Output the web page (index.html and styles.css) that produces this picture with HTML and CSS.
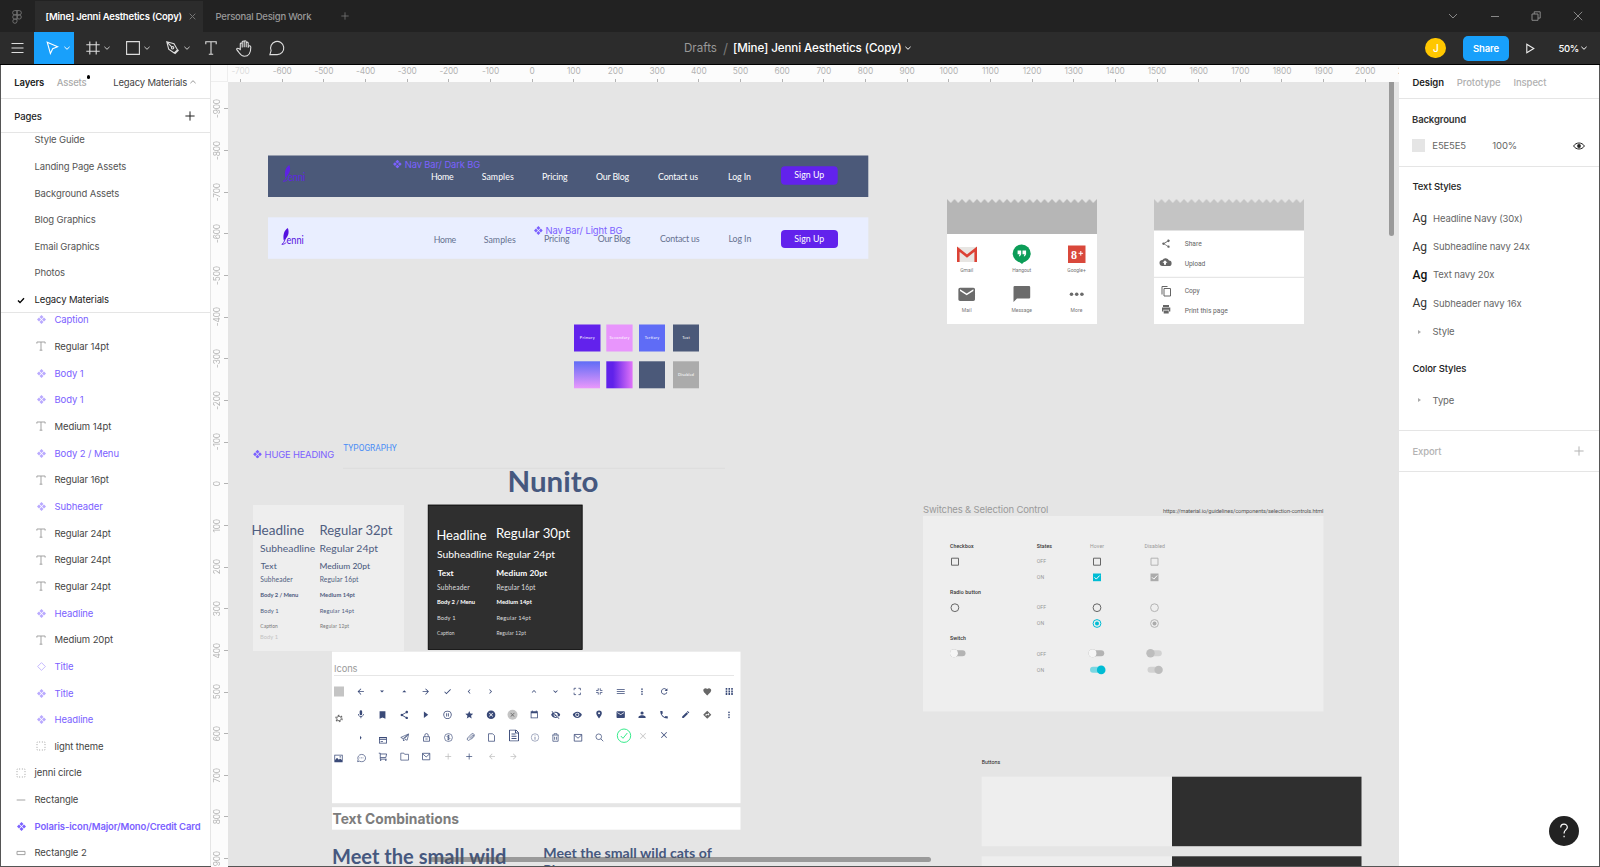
FILE: index.html
```html
<!DOCTYPE html>
<html lang="en">
<head>
<meta charset="utf-8">
<title>[Mine] Jenni Aesthetics (Copy)</title>
<link rel="stylesheet" href="styles.css">
</head>
<body>
<svg class="defs" width="0" height="0">
  <defs>
    <symbol id="component" viewBox="0 0 10 10"><path d="M5 0l2.200 2.200L5 4.400 2.800 2.200zM5 5.600l2.200 2.200L5 10 2.800 7.800zM2.200 2.800L4.400 5 2.200 7.200 0 5zM7.800 2.800L10 5 7.800 7.200 5.600 5z" fill="currentColor"/></symbol>
    <symbol id="diamond" viewBox="0 0 10 10"><path d="M5 .7L9.3 5 5 9.3.7 5z" fill="none" stroke="currentColor" stroke-width=".9"/></symbol>
    <symbol id="text" viewBox="0 0 10 10"><path d="M.9 2.6V1h8.2v1.6M5 1v8.2M3.6 9.2h2.8" fill="none" stroke="currentColor" stroke-width=".9"/></symbol>
    <symbol id="group" viewBox="0 0 10 10"><path d="M1 1h8v8H1z" fill="none" stroke="currentColor" stroke-width="1" stroke-dasharray=".9 1.767" stroke-dashoffset=".45"/></symbol>
    <symbol id="line" viewBox="0 0 10 10"><path d="M.7 5h8.6" stroke="currentColor" stroke-width=".9"/></symbol>
    <symbol id="rect" viewBox="0 0 10 10"><path d="M1 3.4h8v3.2H1z" fill="none" stroke="currentColor" stroke-width=".9"/></symbol>
    <symbol id="chev" viewBox="0 0 8 8"><path d="M1.400 2.800L4 5.300l2.600-2.500" fill="none" stroke="currentColor" stroke-width="1"/></symbol>
    <symbol id="plus" viewBox="0 0 10 10"><path d="M5 .4v9.2M.4 5h9.200" fill="none" stroke="currentColor" stroke-width="1"/></symbol>
    <symbol id="back" viewBox="0 0 24 24"><path d="M20 11H7.800l5.600-5.600L12 4l-8 8 8 8 1.400-1.400L7.800 13H20z"/></symbol>
    <symbol id="forward" viewBox="0 0 24 24"><path d="M12 4l-1.400 1.400 5.600 5.600H4v2h12.200l-5.600 5.600L12 20l8-8z"/></symbol>
    <symbol id="check" viewBox="0 0 24 24"><path d="M9 16.200L4.800 12l-1.400 1.400L9 19 21 7l-1.400-1.400z"/></symbol>
    <symbol id="left" viewBox="0 0 24 24"><path d="M15.400 7.400L14 6l-6 6 6 6 1.400-1.400-4.600-4.600z"/></symbol>
    <symbol id="right" viewBox="0 0 24 24"><path d="M10 6L8.600 7.400l4.600 4.600-4.600 4.600L10 18l6-6z"/></symbol>
    <symbol id="up" viewBox="0 0 24 24"><path d="M12 8l-6 6 1.400 1.400 4.600-4.600 4.600 4.600L18 14z"/></symbol>
    <symbol id="down" viewBox="0 0 24 24"><path d="M16.600 8.600L12 13.200 7.400 8.600 6 10l6 6 6-6z"/></symbol>
    <symbol id="full" viewBox="0 0 24 24"><path d="M4 9V4h5M15 4h5v5M20 15v5h-5M9 20H4v-5" fill="none" stroke="currentColor" stroke-width="2"/></symbol>
    <symbol id="unfull" viewBox="0 0 24 24"><path d="M9.500 4v5.500H4M14.500 4v5.500H20M20 14.500h-5.500V20M4 14.500h5.500V20" fill="none" stroke="currentColor" stroke-width="2"/></symbol>
    <symbol id="menu" viewBox="0 0 24 24"><path d="M2 18h20v-2H2zM2 13h20v-2H2zM2 6v2h20V6z"/></symbol>
    <symbol id="dots" viewBox="0 0 24 24"><path d="M12 8a2 2 0 100-4 2 2 0 000 4zm0 2a2 2 0 100 4 2 2 0 000-4zm0 6a2 2 0 100 4 2 2 0 000-4z"/></symbol>
    <symbol id="refresh" viewBox="0 0 24 24"><path d="M17.600 6.400A8 8 0 1019.700 14h-2.100A6 6 0 1112 6c1.700 0 3.100.7 4.200 1.800L13 11h7V4z"/></symbol>
    <symbol id="heart" viewBox="0 0 24 24"><path d="M12 21.300l-1.500-1.300C5.400 15.400 2 12.300 2 8.500 2 5.400 4.400 3 7.500 3c1.700 0 3.400.8 4.500 2.100C13.100 3.800 14.800 3 16.500 3 19.600 3 22 5.400 22 8.500c0 3.800-3.400 6.900-8.600 11.500z"/></symbol>
    <symbol id="grid" viewBox="0 0 24 24"><path d="M3 8h4V3H3zm7 13h4v-5h-4zm-7 0h4v-5H3zm0-6.500h4v-5H3zm7 0h4v-5h-4zM17 3v5h4V3zm-7 5h4V3h-4zm7 6.500h4v-5h-4zm0 6.500h4v-5h-4z"/></symbol>
    <symbol id="mic" viewBox="0 0 24 24"><path d="M12 14a3 3 0 003-3V5a3 3 0 10-6 0v6a3 3 0 003 3zm5.300-3a5.300 5.300 0 01-10.600 0H5c0 3.400 2.700 6.200 6 6.700V21h2v-3.300c3.300-.5 6-3.300 6-6.700z"/></symbol>
    <symbol id="bookmark" viewBox="0 0 24 24"><path d="M5 3v18l7-3 7 3V3z"/></symbol>
    <symbol id="share" viewBox="0 0 24 24"><path d="M18 16.100c-.8 0-1.400.3-2 .8L8.900 12.700a3.300 3.300 0 000-1.400L16 7.200A3 3 0 1015 5c0 .2 0 .5.100.7L8 9.800A3 3 0 108 14.200l7.100 4.200-.1.600a2.900 2.900 0 103-2.900z"/></symbol>
    <symbol id="play" viewBox="0 0 24 24"><path d="M8 4v16l11-8z"/></symbol>
    <symbol id="pause" viewBox="0 0 24 24"><path d="M9 16h2V8H9zm3-14a10 10 0 100 20 10 10 0 000-20zm0 18a8 8 0 110-16 8 8 0 010 16zm1-4h2V8h-2z"/></symbol>
    <symbol id="star" viewBox="0 0 24 24"><path d="M12 17.300l6.200 3.700-1.700-7L22 9.200l-7.200-.6L12 2 9.200 8.600 2 9.200 7.500 14l-1.700 7z"/></symbol>
    <symbol id="cancel" viewBox="0 0 24 24"><path d="M12 1a11 11 0 100 22 11 11 0 000-22zm5 14.600L15.600 17 12 13.400 8.400 17 7 15.600l3.600-3.600L7 8.400 8.400 7l3.600 3.600L15.600 7 17 8.400 13.400 12z"/></symbol>
    <symbol id="close" viewBox="0 0 24 24"><path d="M20 5.400L18.600 4 12 10.600 5.400 4 4 5.400l6.600 6.600L4 18.600 5.400 20l6.600-6.600 6.600 6.600 1.400-1.400-6.600-6.600z"/></symbol>
    <symbol id="cal" viewBox="0 0 24 24"><path d="M20 3h-2V1h-2v2H8V1H6v2H3v18h18V3zm-1 16H5V8h14z"/></symbol>
    <symbol id="eye" viewBox="0 0 24 24"><path d="M12 4.500C7 4.500 2.700 7.600 1 12a11.800 11.800 0 0022 0c-1.700-4.400-6-7.500-11-7.500zM12 17a5 5 0 110-10 5 5 0 010 10zm0-8a3 3 0 100 6 3 3 0 000-6z"/></symbol>
    <symbol id="eyeoff" viewBox="0 0 24 24"><path d="M12 7a5 5 0 014.600 6.800l3 3A11.800 11.800 0 0023 12C21.300 7.600 17 4.500 12 4.500c-1.400 0-2.700.3-4 .7l2.200 2.200c.5-.3 1.100-.4 1.800-.4zM2 4.300l2.700 2.700A11.800 11.800 0 001 12a11.800 11.800 0 0015.400 6.700l3.300 3.300 1.300-1.300L3.300 3zM7.500 9.800l1.600 1.500a3 3 0 003.600 3.600l1.500 1.600A5 5 0 017.500 9.800z"/></symbol>
    <symbol id="pin" viewBox="0 0 24 24"><path d="M12 2a7 7 0 00-7 7c0 5.200 7 13 7 13s7-7.800 7-13a7 7 0 00-7-7zm0 9.500a2.500 2.500 0 110-5 2.500 2.500 0 010 5z"/></symbol>
    <symbol id="mail" viewBox="0 0 24 24"><path d="M20 4H4a2 2 0 00-2 2v12c0 1.100.9 2 2 2h16a2 2 0 002-2V6a2 2 0 00-2-2zm0 4l-8 5-8-5V6l8 5 8-5z"/></symbol>
    <symbol id="mailo" viewBox="0 0 24 24"><path d="M3 4h18v16H3zM3 5l9 8 9-8" fill="none" stroke="currentColor" stroke-width="1.900"/></symbol>
    <symbol id="person" viewBox="0 0 24 24"><path d="M12 12a4 4 0 100-8 4 4 0 000 8zm0 2c-2.700 0-9 1.300-9 4v3h18v-3c0-2.700-6.300-4-9-4z"/></symbol>
    <symbol id="phone" viewBox="0 0 24 24"><path d="M6.600 10.800a15.100 15.100 0 006.600 6.600l2.200-2.200c.3-.3.700-.4 1-.2 1.100.4 2.300.6 3.600.6.600 0 1 .4 1 1V20c0 .6-.4 1-1 1A17 17 0 013 4c0-.6.500-1 1-1h3.500c.6 0 1 .4 1 1 0 1.300.2 2.500.6 3.600.1.300 0 .7-.3 1z"/></symbol>
    <symbol id="pencil" viewBox="0 0 24 24"><path d="M3 17.200V21h3.800L17.800 9.900l-3.700-3.700zM21 7l-4-4-2 2 4 4z"/></symbol>
    <symbol id="directions" viewBox="0 0 24 24"><path d="M21.700 11.300l-9-9a1 1 0 00-1.400 0l-9 9a1 1 0 000 1.400l9 9c.4.400 1 .4 1.400 0l9-9a1 1 0 000-1.400zM14 14.500V12h-4v3H8v-4c0-.6.400-1 1-1h5V7.500l3.500 3.500z"/></symbol>
    <symbol id="gear" viewBox="0 0 24 24"><circle cx="12" cy="12" r="6" fill="none" stroke="currentColor" stroke-width="2.400"/><circle cx="12" cy="12" r="8.500" fill="none" stroke="currentColor" stroke-width="3" stroke-dasharray="4.450 4.450"/></symbol>
    <symbol id="card" viewBox="0 0 24 24"><path d="M2 4h20v16H2zm2 7v7h16v-7zM4 6v2h16V6zM6 14h6v1.800H6z" fill-rule="evenodd"/></symbol>
    <symbol id="plane" viewBox="0 0 24 24"><path d="M22 3L2 12l6 3 1 6 4-4 5 2zM8 15L20 5l-9 11" fill="none" stroke="currentColor" stroke-width="1.800"/></symbol>
    <symbol id="lock" viewBox="0 0 24 24"><path d="M4 10h16v12H4zM7.500 10V6a4.500 4.500 0 019 0v4M9 16h6" fill="none" stroke="currentColor" stroke-width="2"/></symbol>
    <symbol id="dollar" viewBox="0 0 24 24"><circle cx="12" cy="12" r="10" fill="none" stroke="currentColor" stroke-width="1.600"/><path d="M15.500 8.500c-1-1.500-7-1.800-7 1 0 3 7 1.800 7 4.800 0 2.800-6 2.600-7.200.7M12 5v14" fill="none" stroke="currentColor" stroke-width="1.800"/></symbol>
    <symbol id="clip" viewBox="0 0 24 24"><path d="M8 15l8-8c2-2 4 0 2.500 2L9 19c-3 3-8-1-5-5L13.500 4c3.500-4 10 1 6.500 6l-7 7.500" fill="none" stroke="currentColor" stroke-width="1.700"/></symbol>
    <symbol id="file" viewBox="0 0 24 24"><path d="M4 2h11l5 5v15H4z" fill="none" stroke="currentColor" stroke-width="2"/></symbol>
    <symbol id="doc" viewBox="0 0 24 24"><path d="M3 1h13l5 5v17H3zM7 9h8M7 13.500h10M7 18h10M15 1v6h6" fill="none" stroke="currentColor" stroke-width="1.900"/></symbol>
    <symbol id="info" viewBox="0 0 24 24"><circle cx="12" cy="12" r="10" fill="none" stroke="currentColor" stroke-width="1.500"/><path d="M11 6.500h2v2.300h-2zM11 10.500h2V18h-2z"/></symbol>
    <symbol id="trash" viewBox="0 0 24 24"><path d="M3 5.500h18M8 5V2h8v3M5 6v16h14V6M9.500 10v8M14.500 10v8" fill="none" stroke="currentColor" stroke-width="1.900"/></symbol>
    <symbol id="search" viewBox="0 0 24 24"><circle cx="10" cy="10" r="7.500" fill="none" stroke="currentColor" stroke-width="1.900"/><path d="M15.500 15.500L22 22" stroke="currentColor" stroke-width="2"/></symbol>
    <symbol id="image" viewBox="0 0 24 24"><path d="M1 2h22v20H1zm2 2v12l5-6 5 5 3-3 5 4V4zm12 2h3v3h-3z" fill-rule="evenodd"/></symbol>
    <symbol id="chat" viewBox="0 0 24 24"><path d="M2 22l1.500-5.500A10 9.500 0 117 20.500zM7 12h2M11 12h2M15 12h2" fill="none" stroke="currentColor" stroke-width="1.800"/></symbol>
    <symbol id="cart" viewBox="0 0 24 24"><path d="M1 3h4v15h16M5 5h16l-2 9H5" fill="none" stroke="currentColor" stroke-width="2"/><circle cx="6" cy="20.500" r="2"/><circle cx="19" cy="20.500" r="2"/></symbol>
    <symbol id="folder" viewBox="0 0 24 24"><path d="M2 3h8l2 3h10v15H2z" fill="none" stroke="currentColor" stroke-width="1.800"/></symbol>
    <symbol id="add" viewBox="0 0 24 24"><path d="M12 4v16M4 12h16" fill="none" stroke="currentColor" stroke-width="1.900"/></symbol>
    <linearGradient id="g1" x1="0" y1="0" x2="0" y2="1"><stop offset="0" stop-color="#5f6cf6"/><stop offset="1" stop-color="#ea98fb"/></linearGradient>
    <linearGradient id="g2" x1="0" y1="0" x2="1" y2="0"><stop offset=".25" stop-color="#6022ea"/><stop offset="1" stop-color="#e173f8"/></linearGradient>
    <pattern id="teeth" width="7.500" height="5" patternUnits="userSpaceOnUse" x="0" y="0"><path d="M0 0l3.750 4L7.500 0z" fill="#e5e5e5"/></pattern>
    <g id="logo"><path d="M6.300 0C2.500 2.300 1.300 7 2.200 12.300 6.600 9.500 8.200 4.500 6.300 0z" fill="currentColor"/><path d="M5.200 4C4.500 9 3 15 .3 16.300c1.600.2 3.600-.8 4.500-2" fill="none" stroke="currentColor" stroke-width=".9"/><text class="logo-text" x="5" y="15.800" textLength="17.300" lengthAdjust="spacingAndGlyphs">enni</text></g>
  </defs>
</svg>

<div class="app">
  <header class="tabs">
    <svg class="figma" viewBox="0 0 10 14" width="10" height="14"><path d="M5 .6H2.800a2.100 2.100 0 000 4.300H5zM5 .6h2.200a2.100 2.100 0 010 4.300H5zM5 4.900H2.800a2.100 2.100 0 000 4.200H5zM5 9.100H2.800A2.100 2.100 0 105 11.300z" /><circle cx="7.200" cy="7" r="2.100"/></svg>
    <div class="tab active"><span>[Mine] Jenni Aesthetics (Copy)</span><svg width="7" height="7" viewBox="0 0 7 7"><path d="M.7.7l5.600 5.600M6.300.7L.7 6.300"/></svg></div>
    <div class="tab second"><span>Personal Design Work</span></div>
    <svg class="newtab" width="8" height="8"><use href="#plus"/></svg>
    <div class="window">
      <svg viewBox="0 0 10 10"><path d="M1 3l4 4 4-4"/></svg>
      <svg viewBox="0 0 10 10"><path d="M1 5.500h8"/></svg>
      <svg viewBox="0 0 10 10"><path d="M1 3h6v6.300H1zM3.200 3V.8h6v6.300H7"/></svg>
      <svg viewBox="0 0 10 10"><path d="M.8.800l8.400 8.400M9.200.800L.8 9.200"/></svg>
    </div>
  </header>

  <div class="toolbar">
    <div class="tools">
      <div class="tool menu"><svg width="13" height="12" viewBox="0 0 13 12"><path d="M.5 1.500h12M.5 6h12M.5 10.500h12"/></svg></div>
      <div class="tool on"><svg width="13" height="14" viewBox="0 0 13 14"><path d="M1.200 1.200l3.200 11.300 2.300-4.700 5-2z"/></svg><svg class="chev" width="8" height="8"><use href="#chev"/></svg></div>
      <div class="tool"><svg width="14" height="14" viewBox="0 0 14 14"><path d="M3.800.5v13M10.200.5v13M.3 3.800h13.400M.3 10.200h13.400"/></svg><svg class="chev" width="8" height="8"><use href="#chev"/></svg></div>
      <div class="tool"><svg width="14" height="14" viewBox="0 0 14 14"><path d="M.6.600h12.800v12.800H.6z"/></svg><svg class="chev" width="8" height="8"><use href="#chev"/></svg></div>
      <div class="tool"><svg width="14" height="14" viewBox="0 0 14 14"><path d="M.8.800l7.200 2 3.500 6-3.300 3.200-5.500-3.800zM.8.800l4.900 5.100M8.800 12.800l3.800-3.800"/><circle cx="6.600" cy="6.800" r="1.200"/></svg><svg class="chev" width="8" height="8"><use href="#chev"/></svg></div>
      <div class="tool t"><svg width="12" height="14" viewBox="0 0 12 14"><path d="M.8 3.200V.8h10.400v2.400M6 .8v12.400M3.800 13.200h4.400"/></svg></div>
      <div class="tool h"><svg width="16" height="17" viewBox="0 0 16 17"><path d="M4.300 9.500V4c0-1.400 1.900-1.400 1.900 0v3.500V2.200c0-1.600 2-1.600 2 0v5V1.800c0-1.500 2-1.500 2 0v5.500V3.200c0-1.400 2-1.400 2 0v4.600c0-2.600 2.600-2.600 2.600-.5 0 5-1.500 9-6.300 9C4.300 16.300 3.500 12.500 1 10c-1-1.200.6-2.300 1.700-1.400z"/></svg></div>
      <div class="tool c"><svg width="16" height="16" viewBox="0 0 16 16"><path d="M.9 14.600h7.300a6.600 6.600 0 10-6.100-4z"/></svg></div>
    </div>
    <div class="filename"><span class="drafts">Drafts</span><span class="slash">/</span><span class="fname">[Mine] Jenni Aesthetics (Copy)</span><svg width="8" height="8"><use href="#chev"/></svg></div>
    <div class="actions">
      <div class="avatar">J</div>
      <div class="sharebtn">Share</div>
      <svg class="present" width="9" height="11" viewBox="0 0 9 11"><path d="M.8 1.200v8.600l7-4.300z"/></svg>
      <span class="zoom">50%</span><svg width="8" height="8"><use href="#chev"/></svg>
    </div>
  </div>

  <aside class="left">
    <div class="lefttabs"><b>Layers</b><span class="assets">Assets<i></i></span><span class="page">Legacy Materials</span><svg width="8" height="8" class="flip"><use href="#chev"/></svg></div>
    <div class="pageshead"><span>Pages</span><svg width="10" height="10"><use href="#plus"/></svg></div>
    <ul class="pages">
      <li>Style Guide</li><li>Landing Page Assets</li><li>Background Assets</li><li>Blog Graphics</li><li>Email Graphics</li><li>Photos</li>
      <li class="current"><svg width="8" height="7" viewBox="0 0 8 7"><path d="M1 3.600l2 2L7 1.200"/></svg>Legacy Materials</li>
    </ul>
    <ul class="layers">
      <li class="comp"><svg><use href="#component"/></svg>Caption</li>
      <li><svg><use href="#text"/></svg>Regular 14pt</li>
      <li class="comp"><svg><use href="#component"/></svg>Body 1</li>
      <li class="comp"><svg><use href="#component"/></svg>Body 1</li>
      <li><svg><use href="#text"/></svg>Medium 14pt</li>
      <li class="comp"><svg><use href="#component"/></svg>Body 2 / Menu</li>
      <li><svg><use href="#text"/></svg>Regular 16pt</li>
      <li class="comp"><svg><use href="#component"/></svg>Subheader</li>
      <li><svg><use href="#text"/></svg>Regular 24pt</li>
      <li><svg><use href="#text"/></svg>Regular 24pt</li>
      <li><svg><use href="#text"/></svg>Regular 24pt</li>
      <li class="comp"><svg><use href="#component"/></svg>Headline</li>
      <li><svg><use href="#text"/></svg>Medium 20pt</li>
      <li class="comp"><svg><use href="#diamond"/></svg>Title</li>
      <li class="comp"><svg><use href="#component"/></svg>Title</li>
      <li class="comp"><svg><use href="#component"/></svg>Headline</li>
      <li><svg><use href="#group"/></svg>light theme</li>
      <li class="top"><svg><use href="#group"/></svg>jenni circle</li>
      <li class="top"><svg><use href="#line"/></svg>Rectangle</li>
      <li class="top comp strong"><svg><use href="#component"/></svg>Polaris-icon/Major/Mono/Credit Card</li>
      <li class="top"><svg><use href="#rect"/></svg>Rectangle 2</li>
    </ul>
  </aside>

  <main class="workspace">
    <div class="corner"></div>
    <div class="ruler-x"><div class="marks">
      <span class="faded">-700</span><span>-600</span><span>-500</span><span>-400</span><span>-300</span><span>-200</span><span>-100</span><span>0</span><span>100</span><span>200</span><span>300</span><span>400</span><span>500</span><span>600</span><span>700</span><span>800</span><span>900</span><span>1000</span><span>1100</span><span>1200</span><span>1300</span><span>1400</span><span>1500</span><span>1600</span><span>1700</span><span>1800</span><span>1900</span><span>2000</span><span>2100</span>
    </div></div>
    <div class="ruler-y"><div class="marks">
      <span><b>-900</b></span><span><b>-800</b></span><span><b>-700</b></span><span><b>-600</b></span><span><b>-500</b></span><span><b>-400</b></span><span><b>-300</b></span><span><b>-200</b></span><span><b>-100</b></span><span><b>0</b></span><span><b>100</b></span><span><b>200</b></span><span><b>300</b></span><span><b>400</b></span><span><b>500</b></span><span><b>600</b></span><span><b>700</b></span><span><b>800</b></span><span><b>900</b></span>
    </div></div>
    <div class="canvas">
      <svg class="stage" width="1171" height="784" viewBox="228 82 1171 784">
        <!-- Nav bars -->
        <g class="nunito nav">
          <rect x="268" y="155.500" width="600.300" height="41.500" fill="#4b5979"/>
          <use href="#logo" x="283" y="165" color="#5f22e6"/>
          <g fill="#fff">
            <text x="431" y="179.500" textLength="22.700">Home</text><text x="481.700" y="179.500" textLength="32">Samples</text><text x="542" y="179.500" textLength="25.700">Pricing</text><text x="596" y="179.500" textLength="33">Our Blog</text><text x="658" y="179.500" textLength="40">Contact us</text><text x="728" y="179.500" textLength="23">Log In</text>
          </g>
          <rect x="781" y="166.300" width="56.700" height="18.500" rx="4" fill="#6222ec"/><text x="794.300" y="178" textLength="30" fill="#fff">Sign Up</text>
          <rect x="268" y="217.300" width="600.300" height="41.500" fill="#e9eeff"/>
          <use href="#logo" x="281.500" y="228" color="#5512e0"/>
          <g fill="#66718f">
            <text x="433.700" y="242.500" textLength="22.500">Home</text><text x="483.700" y="242.500" textLength="32">Samples</text><text x="544" y="242" textLength="25.500">Pricing</text><text x="597.700" y="242" textLength="32.600">Our Blog</text><text x="660" y="242" textLength="39.500">Contact us</text><text x="728.500" y="242" textLength="22.800">Log In</text>
          </g>
          <rect x="781" y="230" width="57" height="18" rx="4" fill="#6222ec"/><text x="794.300" y="242" textLength="30" fill="#fff">Sign Up</text>
        </g>
        <g class="label" fill="#7b61ff" color="#7b61ff">
          <use href="#component" x="393" y="159.700" width="8.800" height="8.800"/><text x="404.700" y="167.500" textLength="75.600">Nav Bar/ Dark BG</text>
          <use href="#component" x="534" y="226.100" width="8.800" height="8.800"/><text x="545.500" y="234.200" textLength="77">Nav Bar/ Light BG</text>
          <use href="#component" x="253.100" y="449.800" width="8.800" height="8.800"/><text x="264.600" y="457.800" textLength="69.600">HUGE HEADING</text>
        </g>

        <!-- Palette -->
        <rect x="574" y="324.500" width="26.500" height="27" fill="#6222ec"/><rect x="606.300" y="324.500" width="26.300" height="27" fill="#e895fc"/><rect x="639" y="324.500" width="26" height="27" fill="#5f6cf6"/><rect x="673" y="324.500" width="26" height="27" fill="#4b5979"/>
        <rect x="574" y="361.300" width="26" height="27" fill="url(#g1)"/><rect x="606.300" y="361.300" width="26.300" height="27" fill="url(#g2)"/><rect x="639" y="361.300" width="26" height="27" fill="#4b5979"/><rect x="673" y="361.300" width="26" height="27" fill="#ababab"/>
        <g class="nunito tiny" fill="#fff"><text x="587.300" y="338.700" textLength="15">Primary</text><text x="619.500" y="338.700" textLength="20">Secondary</text><text x="652" y="338.700" textLength="14.500">Tertiary</text><text x="686" y="338.700" textLength="7.500">Text</text><text x="686" y="375.700" textLength="16">Disabled</text></g>

        <!-- Share sheets -->
        <g transform="translate(947 199)">
          <rect width="150" height="35" fill="#b6b6b6"/><rect width="150" height="5" fill="url(#teeth)"/><rect y="35" width="150" height="90" fill="#fff"/>
          <g transform="translate(10 48)"><rect width="20" height="15" fill="#e8e6e3"/><path d="M1.300 15V2.200L10 9l8.700-6.800V15" fill="none" stroke="#dc4235" stroke-width="2.600"/></g>
          <circle cx="74.700" cy="54.500" r="9" fill="#0c9d58"/><path d="M70 61l5 4 5-5z" fill="#0c9d58"/><path d="M70.600 51.500h3.600v3.700l-1.200 2h-1.200l.9-2h-2.100zM75.500 51.500h3.600v3.700l-1.200 2h-1.200l.9-2h-2.100z" fill="#fff"/>
          <rect x="121" y="46.500" width="17.500" height="17.500" fill="#d9483b"/><text class="gplus" x="124" y="59.500">8</text><path d="M131.500 54.300h4.600M133.800 52v4.600" stroke="#fff"/>
          <g fill="#6b6b6b"><use href="#mail" x="9.700" y="85.300" width="20" height="20"/><path d="M67.700 87H82a1.200 1.200 0 011.200 1.200v10A1.200 1.200 0 0182 99.500H70l-3.500 3.500V88.200A1.200 1.200 0 0167.700 87z"/><circle cx="124.500" cy="95.300" r="1.800"/><circle cx="129.700" cy="95.300" r="1.800"/><circle cx="134.900" cy="95.300" r="1.800"/></g>
          <g class="sheet-label"><text x="19.700" y="72.700" textLength="13">Gmail</text><text x="74.700" y="72.700" textLength="19">Hangout</text><text x="129.500" y="72.700" textLength="18.500">Google+</text><text x="19.700" y="112.700" textLength="10">Mail</text><text x="74.700" y="112.700" textLength="20.500">Message</text><text x="129.500" y="112.700" textLength="12">More</text></g>
        </g>
        <g transform="translate(1154 199)">
          <rect width="150" height="32" fill="#c4c4c4"/><rect width="150" height="5" fill="url(#teeth)"/><rect y="31.500" width="150" height="93.500" fill="#fff"/><path d="M0 78.300h150" stroke="#e0e0e0"/>
          <g fill="#666"><use href="#share" x="7" y="39.700" width="10" height="10"/><path transform="translate(1 2)" d="M14 59.500a3.700 3.700 0 00-6.600-.6A2.900 2.900 0 007.700 65h6a2.600 2.600 0 00.3-5.500zm-1.500 2.200h-1.500v2H9v-2H7.500L10 59.200z"/><path d="M8 95.500V87.500h5.500M10 89.500h6.500V97H10z" fill="none" stroke="#666"/><path d="M9 106h6v2H9zM8 108.500h8.300v4H15v-1.700H9.300v1.700H8zM9.700 111.500h5v3h-5z"/></g>
          <g class="sheet-item"><text x="30.700" y="47" textLength="17">Share</text><text x="30.700" y="67.200" textLength="20.500">Upload</text><text x="30.700" y="93.700" textLength="15">Copy</text><text x="30.700" y="113.600" textLength="43">Print this page</text></g>
        </g>

        <!-- Typography -->
        <text class="typo" x="343.300" y="451.200" textLength="53.500" lengthAdjust="spacingAndGlyphs">TYPOGRAPHY</text><path d="M343 468.300h382" stroke="#ddd"/>
        <text class="nunito big" x="507.500" y="491.500" textLength="91" lengthAdjust="spacingAndGlyphs">Nunito</text>
        <rect x="253" y="505" width="151" height="146" fill="#eee"/><rect x="428.200" y="505" width="154" height="144.500" fill="#2f2f2f" stroke="#000" stroke-width=".8"/>
        <g class="nunito" fill="#4f5d7f">
          <g font-size="13.300"><text x="251.500" y="535.200" textLength="52.700" lengthAdjust="spacingAndGlyphs">Headline</text><text x="319.500" y="535" textLength="73" lengthAdjust="spacingAndGlyphs">Regular 32pt</text></g>
          <g font-size="10"><text x="260" y="552" textLength="55.300" lengthAdjust="spacingAndGlyphs">Subheadline</text><text x="319.500" y="552" textLength="58.500" lengthAdjust="spacingAndGlyphs">Regular 24pt</text></g>
          <g font-size="8.300" font-weight="500"><text x="260.700" y="568.500" textLength="16">Text</text><text x="319.500" y="568.500" textLength="50.500" lengthAdjust="spacingAndGlyphs">Medium 20pt</text></g>
          <g font-size="6.700"><text x="260.300" y="582.300" textLength="32.300">Subheader</text><text x="319.700" y="582.300" textLength="38.800">Regular 16pt</text></g>
          <g font-size="5.800" font-weight="700"><text x="260.300" y="596.800" textLength="38">Body 2 / Menu</text><text x="319.700" y="596.800" textLength="35.300">Medium 14pt</text></g>
          <g font-size="5.800"><text x="260.300" y="612.500" textLength="18.300">Body 1</text><text x="319.700" y="612.500" textLength="34.300">Regular 14pt</text></g>
          <g font-size="4.900" fill="#777"><text x="260.300" y="628" textLength="17.500">Caption</text><text x="320" y="628" textLength="29">Regular 12pt</text></g>
          <text x="260" y="638.800" textLength="18" font-size="5.800" fill="#c4c4c4">Body 1</text>
        </g>
        <g class="nunito" fill="#fff">
          <g font-size="12.600"><text x="436.500" y="539.700" textLength="50" lengthAdjust="spacingAndGlyphs">Headline</text><text x="496" y="538.200" textLength="74" lengthAdjust="spacingAndGlyphs">Regular 30pt</text></g>
          <g font-size="10"><text x="437" y="558" textLength="55.500" lengthAdjust="spacingAndGlyphs">Subheadline</text><text x="496" y="558" textLength="59" lengthAdjust="spacingAndGlyphs">Regular 24pt</text></g>
          <g font-size="8.300" font-weight="700"><text x="437.700" y="575.800" textLength="16">Text</text><text x="496.300" y="575.800" textLength="50.700">Medium 20pt</text></g>
          <g font-size="6.700" fill="#ddd"><text x="437" y="589.500" textLength="32.700">Subheader</text><text x="496.500" y="589.500" textLength="39">Regular 16pt</text></g>
          <g font-size="5.800" font-weight="700"><text x="437" y="603.800" textLength="38">Body 2 / Menu</text><text x="496.500" y="603.800" textLength="35.300">Medium 14pt</text></g>
          <g font-size="5.800" fill="#ddd"><text x="437" y="619.700" textLength="18.500">Body 1</text><text x="496.500" y="619.700" textLength="34.300">Regular 14pt</text></g>
          <g font-size="4.900" fill="#ddd"><text x="437" y="635" textLength="17.500">Caption</text><text x="496.500" y="635" textLength="29.500">Regular 12pt</text></g>
        </g>

        <!-- Icon library -->
        <rect x="332" y="651.700" width="408.500" height="151.500" fill="#fff"/><text class="inter gray" x="334" y="672" font-size="9.300" textLength="23.500">Icons</text><path d="M334 675.500h400" stroke="#e6e6e6"/>
        <rect x="334" y="686.500" width="10" height="10" fill="#c4c4c4"/>
        <g fill="#3a4a78" color="#3a4a78">
          <use href="#back" x="356" y="686.800" width="9.500" height="9.500"/><path d="M380 690.500h4l-2 2zM402.300 692.300h4l-2-2z"/><use href="#forward" x="421" y="686.800" width="9.500" height="9.500"/><use href="#check" x="443" y="687" width="9" height="9"/><use href="#left" x="464.700" y="686.900" width="9" height="9"/><use href="#right" x="486" y="686.900" width="9" height="9"/><use href="#up" x="529.500" y="686.900" width="9" height="9"/><use href="#down" x="551" y="686.900" width="9" height="9"/><use href="#full" x="572.500" y="686.700" width="9.500" height="9.500"/><use href="#unfull" x="594.500" y="686.700" width="9.500" height="9.500"/><use href="#menu" x="616" y="686.700" width="9.500" height="9.500"/><use href="#dots" x="637" y="686.700" width="10" height="10"/><use href="#refresh" x="659.500" y="686.700" width="9.500" height="9.500"/><use href="#grid" x="724.500" y="686.700" width="9.500" height="9.500"/>
          <use href="#mic" x="355.900" y="709.500" width="10" height="10"/><use href="#bookmark" x="377.500" y="710" width="10" height="10"/><use href="#share" x="399.300" y="710" width="10" height="10"/><use href="#play" x="420.700" y="710" width="9.500" height="9.500"/><use href="#pause" x="442.500" y="709.800" width="10" height="10"/><use href="#star" x="464.500" y="710.200" width="9.500" height="9.500"/><use href="#cancel" x="486.300" y="710" width="9.500" height="9.500"/><use href="#cal" x="529.500" y="710" width="9.500" height="9.500"/><use href="#eyeoff" x="550.700" y="709.800" width="10" height="10"/><use href="#eye" x="572.300" y="709.800" width="10" height="10"/><use href="#pin" x="594.300" y="709.800" width="9.500" height="9.500"/><use href="#mail" x="615.700" y="709.700" width="10" height="10"/><use href="#person" x="637.300" y="709.800" width="9.500" height="9.500"/><use href="#phone" x="659" y="709.800" width="10" height="10"/><use href="#pencil" x="681" y="709.800" width="9.500" height="9.500"/><use href="#dots" x="724" y="709.800" width="10" height="10"/>
          <path d="M360 735.800v4l1.600-2z"/><use href="#card" x="378.200" y="735.500" width="9.500" height="9.500"/><use href="#plane" x="400" y="732.700" width="9.500" height="9.500"/><use href="#lock" x="422" y="733" width="9" height="9"/><use href="#dollar" x="443.700" y="732.800" width="9.500" height="9.500"/><use href="#clip" x="466" y="732.500" width="9.500" height="9.500"/><use href="#file" x="487" y="733" width="9" height="9"/><use href="#doc" x="508" y="729.500" width="12" height="12"/><use href="#info" x="530.500" y="733" width="9" height="9" opacity=".8"/><use href="#trash" x="551" y="733" width="9" height="9"/><use href="#mailo" x="573" y="732.800" width="10" height="10"/><use href="#search" x="595" y="733" width="9" height="9"/><use href="#close" x="659.500" y="730.500" width="9" height="9"/>
          <use href="#image" x="334" y="754" width="9" height="9"/><use href="#chat" x="356.800" y="753.200" width="9.300" height="9.300"/><use href="#cart" x="378.300" y="752" width="9.500" height="9.500"/><use href="#folder" x="400" y="752" width="9.300" height="9.300"/><use href="#mailo" x="421.300" y="751.700" width="9.700" height="9.700"/><use href="#add" x="464.700" y="752" width="9" height="9"/>
        </g>
        <g fill="#686868" color="#686868"><use href="#heart" x="702.500" y="687" width="9.500" height="9.500"/><use href="#directions" x="702.500" y="710" width="9.500" height="9.500"/><use href="#gear" x="334.500" y="714" width="9" height="9"/></g>
        <circle cx="512.500" cy="714.800" r="5" fill="#c4c4c4"/><use href="#close" x="509.500" y="711.800" width="6" height="6" fill="#555"/>
        <circle cx="624" cy="735.700" r="6.700" fill="none" stroke="#37eb8c"/><path d="M620.800 736l2.200 2.300 4.300-5.300" fill="none" stroke="#37eb8c"/>
        <g fill="#c4c4c4" color="#b8b8b8"><use href="#close" x="638.500" y="731.500" width="9" height="9"/><use href="#add" x="443.700" y="752" width="9" height="9"/><use href="#back" x="487.500" y="752" width="9" height="9"/><use href="#forward" x="509" y="752" width="9" height="9"/></g>

        <rect x="332" y="807.200" width="408.500" height="22.500" fill="#fff"/><text class="inter" x="332.500" y="823.800" font-size="14.300" font-weight="700" fill="#7d7d7d" textLength="126.500" lengthAdjust="spacingAndGlyphs">Text Combinations</text>
        <g class="nunito" font-weight="700" fill="#46587f"><text x="332" y="863.500" font-size="20.500" textLength="174.500" lengthAdjust="spacingAndGlyphs">Meet the small wild</text><text x="543.300" y="857.500" font-size="13.800" textLength="168.500" lengthAdjust="spacingAndGlyphs">Meet the small wild cats of</text><text x="543.300" y="875" font-size="13.800">Planet</text></g>

        <!-- Switches -->
        <text class="inter gray" x="923" y="512.800" font-size="9.500" textLength="125.300">Switches &amp; Selection Control</text><text class="roboto" x="1163" y="513.300" font-size="5.700" fill="#555" textLength="160.500">https://material.io/guidelines/components/selection-controls.html</text>
        <rect x="923" y="516" width="400.500" height="195.500" fill="#eee"/>
        <g class="roboto" font-size="5.200">
          <g fill="#333" font-weight="500"><text x="950" y="547.700" textLength="23.500">Checkbox</text><text x="1036.700" y="547.700" textLength="15.300">States</text><text x="950" y="593.500" textLength="31">Radio button</text><text x="950" y="639.500" textLength="16">Switch</text></g>
          <g fill="#999"><text x="1090" y="547.700" textLength="14">Hover</text><text x="1144.500" y="547.700" textLength="20.500">Disabled</text><text x="1036.700" y="563.200" textLength="9.500">OFF</text><text x="1036.700" y="579" textLength="7.500">ON</text><text x="1036.700" y="609.300" textLength="9.500">OFF</text><text x="1036.700" y="625.200" textLength="7.500">ON</text><text x="1036.700" y="655.500" textLength="9.500">OFF</text><text x="1036.700" y="671.500" textLength="7.500">ON</text></g>
        </g>
        <g fill="none"><path d="M951.500 558.200h7v7h-7zM1093.500 558.200h7v7h-7z" stroke="#666"/><path d="M1151 558.200h7v7h-7z" stroke="#b3b3b3"/><circle cx="954.900" cy="607.700" r="3.900" stroke="#666"/><circle cx="1097" cy="607.700" r="3.900" stroke="#666"/><circle cx="1154.500" cy="607.700" r="3.900" stroke="#b3b3b3"/><circle cx="1097" cy="623.500" r="3.900" stroke="#00bcd4"/><circle cx="1154.500" cy="623.500" r="3.900" stroke="#b3b3b3"/></g>
        <rect x="1093" y="573.500" width="8" height="7.700" fill="#00bcd4"/><rect x="1150.500" y="573.500" width="8" height="7.700" fill="#ababab"/><path d="M1094.500 577.300l1.800 1.800 3.400-3.600M1152 577.300l1.800 1.800 3.400-3.600" stroke="#fff" fill="none"/><circle cx="1097" cy="623.500" r="2" fill="#00bcd4"/><circle cx="1154.500" cy="623.500" r="2" fill="#ababab"/>
        <g fill="#b3b3b3"><rect x="951" y="650.200" width="14.500" height="6" rx="3"/><rect x="1090" y="650.200" width="14.200" height="6" rx="3"/><rect x="1148" y="650.200" width="13.800" height="6" rx="3" fill="#d2d2d2"/><rect x="1147.500" y="666.800" width="14" height="6" rx="3" fill="#d2d2d2"/><rect x="1090" y="666.800" width="14" height="6" rx="3" fill="#7ad7e2"/></g>
        <circle class="knob" cx="954" cy="653.300" r="4" fill="#f5f5f5"/><circle class="knob" cx="1092.600" cy="653.300" r="4" fill="#f5f5f5"/><circle cx="1150.500" cy="653.300" r="4.200" fill="#bdbdbd"/><circle cx="1158.600" cy="669.900" r="4.200" fill="#bdbdbd"/><circle cx="1101.200" cy="669.900" r="4.300" fill="#00bcd4"/>

        <!-- Buttons -->
        <text class="roboto" x="981.700" y="763.500" font-size="5.300" fill="#222" textLength="18.500">Buttons</text>
        <rect x="981.700" y="776.700" width="190.300" height="69.500" fill="#eee"/><rect x="1172" y="776.700" width="189.500" height="69.500" fill="#2f2f2f"/><rect x="981.700" y="856.300" width="190.300" height="12" fill="#eee"/><rect x="1172" y="856.300" width="189.500" height="12" fill="#2f2f2f"/>
      </svg>
      <div class="scroll-y"></div><div class="scroll-x"></div>
    </div>
  </main>

  <aside class="right">
    <div class="righttabs"><b>Design</b><span>Prototype</span><span>Inspect</span></div>
    <section class="bg"><h3>Background</h3><div class="fill"><i></i><span class="hex">E5E5E5</span><span>100%</span><svg width="12" height="8" viewBox="0 0 12 8"><path d="M.6 4C3 0 9 0 11.400 4 9 8 3 8 .6 4z" fill="none" stroke="#222"/><circle cx="6" cy="4" r="1.900" fill="#222"/></svg></div></section>
    <section class="styles"><h3>Text Styles</h3>
      <div class="style"><em>Ag</em>Headline Navy (30x)</div><div class="style"><em>Ag</em>Subheadline navy 24x</div><div class="style"><em class="heavy">Ag</em>Text navy 20x</div><div class="style"><em>Ag</em>Subheader navy 16x</div><div class="style"><i></i>Style</div>
      <h3 class="colors">Color Styles</h3><div class="style"><i></i>Type</div></section>
    <section class="export"><span>Export</span><svg width="10" height="10"><use href="#plus"/></svg></section>
  </aside>
  <div class="help"><svg width="10" height="16" viewBox="0 0 10 16"><path d="M1.700 4.600C1.700 0 8.300 0 8.300 4.300c0 2.600-3.200 2.700-3.200 5.700v.6M5.100 12.800v1.400"/></svg></div>
</div>
</body>
</html>
```

FILE: styles.css
```css
* { box-sizing: border-box; }
body { margin: 0; font-family: Inter, "Liberation Sans", sans-serif; font-size: 9.500px; letter-spacing: -.13px; color: #333; background: #222; }
svg { letter-spacing: 0; }
.defs { position: absolute; }
ul { list-style: none; margin: 0; padding: 0; }
h3 { margin: 0; font-size: 9.500px; line-height: 13px; font-weight: 500; color: #222; }
.app { width: 1600px; height: 867px; overflow: hidden; position: relative; display: grid; grid-template: 32px 33px 802px / 211px 1188px 201px; }

/* Window tabs */
.tabs { grid-column: 1 / -1; background: #222; display: flex; align-items: center; color: #999; font-weight: 500; }
.figma { margin: 2px 13px 0 12px; fill: none; stroke: #777; stroke-width: .9; flex: none; }
.tab { height: 31px; margin-top: 1px; display: flex; align-items: center; white-space: nowrap; flex: none; }
.tab.active { width: 168px; background: #2c2c2c; color: #fff; padding-left: 10.500px; gap: 7px; }
.tab.active span { width: 136px; letter-spacing: -.2px; font-weight: 600; }
.tab.second { padding-left: 12.500px; width: 138px; letter-spacing: -.22px; }
.tab svg { stroke: #777; flex: none; }
.newtab { color: #777; flex: none; }
.window { margin-left: auto; display: flex; gap: 31.600px; padding-right: 17px; }
.window svg { width: 10px; height: 10px; fill: none; stroke: #888; stroke-width: 1; }

/* Toolbar */
.toolbar { grid-column: 1 / -1; background: #2c2c2c; border-bottom: 1px solid #000; display: grid; grid-template-columns: 684px 1fr auto; align-items: center; color: #fff; }
.tools { display: flex; height: 32px; }
.tool { width: 40px; padding: 0 3px 0 12px; display: flex; align-items: center; justify-content: space-between; }
.tool svg { fill: none; stroke: #ddd; stroke-width: 1.100; flex: none; }
.tool .chev { color: #ccc; stroke: none; }
.tool.menu { width: 34px; padding-left: 11px; }
.tool.on { background: #18a0fb; }
.tool.on svg { stroke: #fff; }
.tool.on .chev { color: #fff; stroke: none; }
.tool.t { width: 32px; padding-left: 10.500px; }
.tool.h { width: 32px; padding-left: 10px; }
.tool.c { padding-left: 10.500px; }
.filename { display: flex; align-items: center; font-size: 11.600px; white-space: nowrap; }
.drafts { width: 39px; color: #999; letter-spacing: 0; }
.slash { width: 10px; color: #777; font-size: 14px; }
.fname { width: 171px; font-weight: 500; letter-spacing: -.1px; }
.actions { display: flex; align-items: center; padding-right: 12px; height: 32px; }
.avatar { width: 20.600px; height: 20.600px; border-radius: 50%; background: #ffc700; display: grid; place-items: center; font-size: 10px; font-weight: 500; }
.sharebtn { width: 46px; height: 25px; margin: 0 17px 0 17px; border-radius: 5px; background: #18a0fb; font-weight: 600; display: grid; place-items: center; }
.present { fill: none; stroke: #eee; stroke-width: 1.100; margin-right: 23.500px; }
.zoom { width: 21.500px; font-weight: 500; letter-spacing: -.4px; }

/* Left panel */
.left { background: #fff; border: solid #555; border-width: 0 0 1px 1px; box-shadow: inset -1px 0 #e5e5e5; overflow: hidden; white-space: nowrap; }
.lefttabs { height: 34px; padding: 1px 13px 0 13.300px; display: flex; align-items: center; border-bottom: 1px solid #e5e5e5; }
.lefttabs b { font-weight: 600; width: 42.500px; color: #222; }
.assets { width: 56.500px; color: #aaa; font-weight: 500; display: flex; letter-spacing: -.2px; }
.assets i { width: 3.500px; height: 3.500px; border-radius: 50%; background: #000; margin-top: -1.500px; margin-left: .5px; }
.page { width: 76px; color: #444; letter-spacing: -.17px; }
.flip { transform: rotate(180deg); color: #999; }
.pageshead { height: 34px; padding: 1px 16px 0 13.300px; display: flex; align-items: center; justify-content: space-between; border-bottom: 1px solid #e5e5e5; font-weight: 500; color: #222; }
.pages { height: 180px; border-bottom: 1px solid #e5e5e5; overflow: hidden; display: flex; flex-direction: column; justify-content: flex-end; }
.pages li { flex: none; height: 26.670px; line-height: 26.670px; padding-left: 33.500px; color: #555; }
.pages li.current { padding-left: 16px; display: flex; align-items: center; gap: 9.500px; color: #222; margin-bottom: -1.800px; }
.pages li.current svg { fill: none; stroke: #000; stroke-width: 1.400; }
.layers { margin-top: -6.500px; clip-path: inset(6.700px 0 0 0); }
.layers li { height: 26.670px; display: flex; align-items: center; gap: 8.500px; padding-left: 35px; letter-spacing: -.1px; color: #444; }
.layers svg { width: 10px; height: 10px; color: #999; flex: none; }
.layers .top { padding-left: 15px; }
.layers .comp { color: #7b61ff; }
.layers .comp svg { width: 9px; height: 9px; margin: 0 .5px; color: #b9a9ff; }
.layers .strong { font-weight: 600; letter-spacing: -.13px; }
.layers .strong svg { color: #7b61ff; }

/* Workspace */
.workspace { display: grid; grid-template: 17px 785px / 17px 1171px; overflow: hidden; }
.corner, .ruler-x, .ruler-y { background: #fcfcfc; overflow: hidden; color: #b3b3b3; font-size: 8.300px; letter-spacing: -.1px; }
.corner { border-right: 1px solid #eee; border-bottom: 1px solid #eee; }
.ruler-x .marks { display: flex; margin-left: -8.250px; width: 1300px; }
.ruler-x span { flex: 0 0 41.660px; height: 17px; text-align: center; line-height: 12.500px; background: linear-gradient(#b3b3b3, #b3b3b3) 50% 100% / 1px 3.500px no-repeat; }
.ruler-x .faded { color: #dedede; }
.ruler-y .marks { padding-top: 6px; }
.ruler-y span { height: 41.670px; display: flex; align-items: center; justify-content: flex-start; background: linear-gradient(#b3b3b3, #b3b3b3) 100% 50% / 4px 1px no-repeat; }
.ruler-y b { writing-mode: vertical-rl; transform: rotate(180deg); font-weight: 400; line-height: 12px; }
.canvas { background: #e5e5e5; position: relative; border-bottom: 1px solid #555; overflow: hidden; }
.stage { display: block; }
.scroll-y { position: absolute; left: 1161px; top: 0; width: 5px; height: 154px; border-radius: 0 0 3px 3px; background: #999; }
.scroll-x { position: absolute; left: 202px; top: 775px; width: 501px; height: 5px; border-radius: 3px; background: rgba(80, 80, 80, .5); }
.nunito { font-family: Lato, "Noto Sans", sans-serif; }
.nav { font-size: 8.800px; }
.label { font-size: 9.400px; }
.logo-text { font: 400 11px Lato, sans-serif; fill: currentColor; }
.tiny { font-size: 3.800px; text-anchor: middle; }
.sheet-label { font: 5px Roboto, sans-serif; text-anchor: middle; fill: #777; }
.sheet-item { font: 6.700px Roboto, sans-serif; fill: #666; }
.gplus { font: 700 12px "Liberation Serif", serif; fill: #fff; }
.typo { font: 8.800px Roboto, sans-serif; fill: #4a8df5; }
.big { font-size: 29px; font-weight: 700; fill: #46587f; }
.inter { font-family: Inter, sans-serif; }
.gray { fill: #9a9a9a; }
.roboto { font-family: Roboto, sans-serif; }
.knob { filter: drop-shadow(0 .8px .6px rgba(0, 0, 0, .35)); }

/* Right panel */
.right { background: #fff; border: solid #555; border-width: 0 1px 1px 0; white-space: nowrap; }
.righttabs { height: 34px; padding: 1px 0 0 13.500px; display: flex; align-items: center; gap: 13px; border-bottom: 1px solid #e5e5e5; color: #b0b0b0; font-weight: 500; letter-spacing: -.1px; }
.righttabs b { font-weight: 600; color: #222; }
.bg { height: 68px; padding: 14px 14px 0 13px; border-bottom: 1px solid #e5e5e5; }
.bg h3 { font-weight: 600; color: #333; }
.fill { display: flex; align-items: center; margin-top: 13px; color: #666; }
.fill i { width: 13.300px; height: 13.300px; background: #e5e5e5; }
.hex { width: 60px; margin-left: 7px; }
.fill svg { margin-left: auto; }
.styles { height: 264px; padding: 13px 0 0 13.500px; border-bottom: 1px solid #e5e5e5; }
.styles h3 { margin-bottom: 11px; }
.style { height: 28.400px; display: flex; align-items: center; color: #666; }
.style em { width: 20.500px; font: 400 12px Roboto, sans-serif; color: #333; letter-spacing: 0; }
.style em.heavy { font-weight: 500; color: #111; }
.style i { width: 0; height: 0; border: solid transparent; border-width: 2px 0 2px 3.500px; border-left-color: #aaa; margin: 0 12px 0 5px; }
.styles h3.colors { margin: 16px 0 11px; }
.export { height: 41px; padding: 0 15.500px 0 13.500px; display: flex; align-items: center; justify-content: space-between; color: #b3b3b3; font-weight: 500; border-bottom: 1px solid #e5e5e5; }
.help { position: absolute; left: 1549px; top: 816px; width: 30px; height: 30px; border-radius: 50%; background: #222; display: grid; place-items: center; }
.help svg { fill: none; stroke: #fff; stroke-width: 1.200; }
```
